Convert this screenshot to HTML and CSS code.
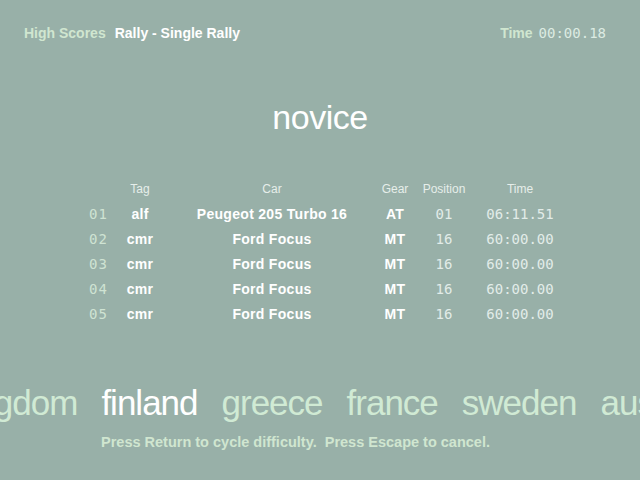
FILE: index.html
```html
<!DOCTYPE html>
<html>
<head>
<meta charset="utf-8">
<link rel="stylesheet" href="styles.css">
</head>
<body>
<div class="screen">
  <div class="topbar">
    <div class="crumbs">
      <span class="dim">High Scores</span>
      <span class="bright">Rally - Single Rally</span>
    </div>
    <div class="clock">
      <span class="dim">Time</span>
      <span class="mono">00:00.18</span>
    </div>
  </div>

  <h1 class="title">novice</h1>

  <div class="scores">
    <div class="hd"></div>
    <div class="hd">Tag</div>
    <div class="hd">Car</div>
    <div class="hd">Gear</div>
    <div class="hd">Position</div>
    <div class="hd">Time</div>

    <div class="num">01</div><div class="tag">alf</div><div class="car">Peugeot 205 Turbo 16</div><div class="gear">AT</div><div class="pos">01</div><div class="time">06:11.51</div>
    <div class="num">02</div><div class="tag">cmr</div><div class="car">Ford Focus</div><div class="gear">MT</div><div class="pos">16</div><div class="time">60:00.00</div>
    <div class="num">03</div><div class="tag">cmr</div><div class="car">Ford Focus</div><div class="gear">MT</div><div class="pos">16</div><div class="time">60:00.00</div>
    <div class="num">04</div><div class="tag">cmr</div><div class="car">Ford Focus</div><div class="gear">MT</div><div class="pos">16</div><div class="time">60:00.00</div>
    <div class="num">05</div><div class="tag">cmr</div><div class="car">Ford Focus</div><div class="gear">MT</div><div class="pos">16</div><div class="time">60:00.00</div>
  </div>

  <div class="strip">
    <div class="track">
      <span class="country">united kingdom</span>
      <span class="country current">finland</span>
      <span class="country">greece</span>
      <span class="country">france</span>
      <span class="country">sweden</span>
      <span class="country">australia</span>
    </div>
  </div>

  <p class="hint">Press Return to cycle difficulty.&nbsp; Press Escape to cancel.</p>
</div>
</body>
</html>
```

FILE: styles.css
```css
html, body {
  margin: 0;
  padding: 0;
  background: #98b0a8;
}

.screen {
  width: 640px;
  height: 480px;
  overflow: hidden;
  background: #98b0a8;
  font-family: "Liberation Sans", Arial, sans-serif;
  color: #ffffff;
}

.topbar {
  display: flex;
  justify-content: space-between;
  padding: 23px 34px 0 24px;
  height: 20px;
  line-height: 20px;
  font-size: 14px;
  font-weight: bold;
}

.crumbs, .clock {
  display: flex;
  gap: 9px;
}

.clock {
  gap: 6px;
}

.dim {
  color: #d0e6d0;
}

.bright {
  color: #ffffff;
}

.mono {
  font-family: "DejaVu Sans Mono", monospace;
  font-weight: normal;
  color: #dcebe2;
}

.title {
  margin: 54px 0 0;
  height: 40px;
  line-height: 40px;
  font-size: 34px;
  font-weight: normal;
  text-align: center;
  letter-spacing: -0.5px;
  color: #ffffff;
}

.scores {
  margin: 39px 0 0 89px;
  display: grid;
  grid-template-columns: 26px 50px 214px 32px 66px 86px;
  grid-auto-rows: 25px;
  align-items: center;
  font-size: 14px;
}

.scores > div {
  text-align: center;
  white-space: nowrap;
}

.scores .hd {
  font-size: 12px;
  color: #e6eeea;
}

.scores .num {
  text-align: left;
  font-family: "DejaVu Sans Mono", monospace;
  letter-spacing: 1px;
  color: #cfe3d3;
}

.tag, .car, .gear {
  font-weight: bold;
  letter-spacing: 0.3px;
  color: #ffffff;
}

.pos, .time {
  font-family: "DejaVu Sans Mono", monospace;
  color: #e2ece8;
}

.strip {
  margin-top: 57px;
  height: 40px;
  overflow: hidden;
}

.track {
  display: flex;
  gap: 24px;
  white-space: nowrap;
  margin-left: -146px;
  line-height: 40px;
  font-size: 35px;
  letter-spacing: -1px;
}

.country {
  color: #d0ead4;
}

.country.current {
  color: #ffffff;
}

.hint {
  margin: 9px 0 0;
  padding-left: 101px;
  line-height: 20px;
  font-size: 14.5px;
  font-weight: bold;
  color: #d0e6d0;
}
```
